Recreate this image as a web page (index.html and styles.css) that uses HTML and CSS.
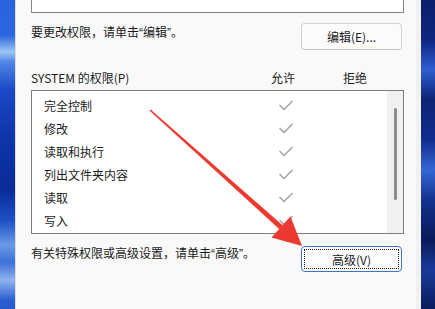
FILE: index.html
```html
<!DOCTYPE html>
<html lang="zh-CN">
<head>
<meta charset="utf-8">
<title>SYSTEM 的权限</title>
<link rel="stylesheet" href="styles.css">
</head>
<body>
  <div class="desk desk-left"></div>
  <div class="window">
    <div class="top-box"></div>
    <div class="row edit-row">
      <p class="note">要更改权限，请单击<span class="q">“</span>编辑<span class="q">”</span>。</p>
      <button class="btn">编辑(E)...</button>
    </div>
    <div class="perm-head">
      <span>SYSTEM 的权限(P)</span>
      <span class="col">允许</span>
      <span></span>
      <span class="col">拒绝</span>
    </div>
    <div class="list">
      <div class="rows">
        <div class="item"><span>完全控制</span><span class="col"><svg class="check" viewBox="0 0 14 11"><polyline points="1,5.5 5,9.5 13,1.5"/></svg></span><span></span><span class="col"></span></div>
        <div class="item"><span>修改</span><span class="col"><svg class="check" viewBox="0 0 14 11"><polyline points="1,5.5 5,9.5 13,1.5"/></svg></span><span></span><span class="col"></span></div>
        <div class="item"><span>读取和执行</span><span class="col"><svg class="check" viewBox="0 0 14 11"><polyline points="1,5.5 5,9.5 13,1.5"/></svg></span><span></span><span class="col"></span></div>
        <div class="item"><span>列出文件夹内容</span><span class="col"><svg class="check" viewBox="0 0 14 11"><polyline points="1,5.5 5,9.5 13,1.5"/></svg></span><span></span><span class="col"></span></div>
        <div class="item"><span>读取</span><span class="col"><svg class="check" viewBox="0 0 14 11"><polyline points="1,5.5 5,9.5 13,1.5"/></svg></span><span></span><span class="col"></span></div>
        <div class="item"><span>写入</span><span class="col"><svg class="check" viewBox="0 0 14 11"><polyline points="1,5.5 5,9.5 13,1.5"/></svg></span><span></span><span class="col"></span></div>
      </div>
      <div class="scrollbar"><span class="thumb"></span></div>
    </div>
    <div class="row adv-row">
      <p class="note">有关特殊权限或高级设置，请单击<span class="q">“</span>高级<span class="q">”</span>。</p>
      <button class="btn btn-default"><span class="focus-ring">高级(V)</span></button>
    </div>
  </div>
  <div class="desk desk-right"></div>
  <svg class="pointer" viewBox="0 0 435 309" width="435" height="309">
    <polygon points="149.4,110.6 150.6,109.4 284.9,227.3 281.1,230.7"/>
    <polygon points="302,246 271.5,237.5 290.5,216.5"/>
  </svg>
</body>
</html>
```
FILE: styles.css
```css
* { box-sizing: border-box; }
html, body { margin: 0; padding: 0; }
body {
  width: 435px;
  height: 309px;
  overflow: hidden;
  display: flex;
  position: relative;
  font-family: "Noto Sans CJK SC", "Microsoft YaHei", sans-serif;
  font-size: 12px;
  color: #1b1b1b;
  background: #0b1f6e;
}
.desk { height: 309px; flex: none; }
.desk-left {
  width: 15px;
  background: linear-gradient(to bottom,
    #2b63de 0px, #2a66e0 35px, #9cc6f2 52px, #4f86e6 62px, #1b48c8 90px,
    #0d34a8 140px, #0a2c98 190px, #1c4fc6 220px, #6b9ae6 245px, #3c6fd8 262px,
    #8fb4ee 280px, #2b5ed2 300px, #2858cc 309px);
}
.desk-right {
  width: 14px;
  background: linear-gradient(to bottom,
    #0c1e6a 0px, #0f2680 40px, #2d5fd0 70px, #0d2272 100px, #122c8e 140px,
    #3567d6 170px, #14318f 200px, #0a1a5a 240px, #1a3a9a 270px, #0b1b5c 309px);
}
.window {
  width: 406px;
  height: 309px;
  flex: none;
  background: #f9f9f9;
  border-left: 1px solid #dedede;
  border-right: 5px solid #f1f1f1;
  padding-left: 15px;
}
.top-box {
  width: 373px;
  height: 13px;
  background: #ffffff;
  border: 1px solid #868686;
  border-top: none;
}
.row {
  width: 373px;
  display: flex;
  justify-content: space-between;
  align-items: flex-start;
}
.edit-row { margin-top: 10px; }
.note { margin: 0; line-height: 18px; white-space: nowrap; }
.q { font-family: "Liberation Sans", sans-serif; }
.btn {
  font: inherit;
  color: #1b1b1b;
  width: 101px;
  height: 27px;
  margin-right: 2px;
  padding: 0;
  background: #fbfbfb;
  border: 1px solid #d3d3d3;
  border-bottom-color: #c2c2c2;
  border-radius: 4px;
  display: flex;
  align-items: center;
  justify-content: center;
}
.btn-default {
  margin-top: 2px;
  height: 26px;
  padding: 2px;
  background: #fdfdfd;
  border: 1px solid #3b74c0;
}
.focus-ring {
  width: 100%;
  height: 100%;
  border: 1px dotted #1a1a1a;
  display: flex;
  align-items: center;
  justify-content: center;
}
.perm-head {
  margin-top: 20px;
  height: 16px;
  line-height: 16px;
  display: grid;
  grid-template-columns: 227px 50px 22px 50px;
}
.col { text-align: center; display: flex; justify-content: center; align-items: center; }
.list {
  margin-top: 4px;
  width: 373px;
  height: 144px;
  border: 1px solid #7e7e7e;
  background: #ffffff;
  display: flex;
}
.rows {
  flex: 1;
  padding: 3px 0 0 12px;
}
.item {
  height: 23px;
  display: grid;
  grid-template-columns: 216px 50px 20px 50px;
  align-items: center;
}
.item .col { height: 23px; padding-left: 2px; }
.check {
  width: 14px;
  height: 11px;
  fill: none;
  stroke: #a8a8a8;
  stroke-width: 1.7;
  stroke-linecap: round;
  stroke-linejoin: round;
}
.scrollbar {
  width: 16px;
  flex: none;
  background: #f0f0f0;
  display: flex;
  flex-direction: column;
  align-items: center;
  padding-top: 17px;
}
.thumb {
  width: 3px;
  height: 92px;
  border-radius: 2px;
  background: #8b8b8b;
}
.adv-row { margin-top: 10px; }
.pointer {
  position: absolute;
  left: 0;
  top: 0;
  fill: #ec3a31;
  pointer-events: none;
}
```
